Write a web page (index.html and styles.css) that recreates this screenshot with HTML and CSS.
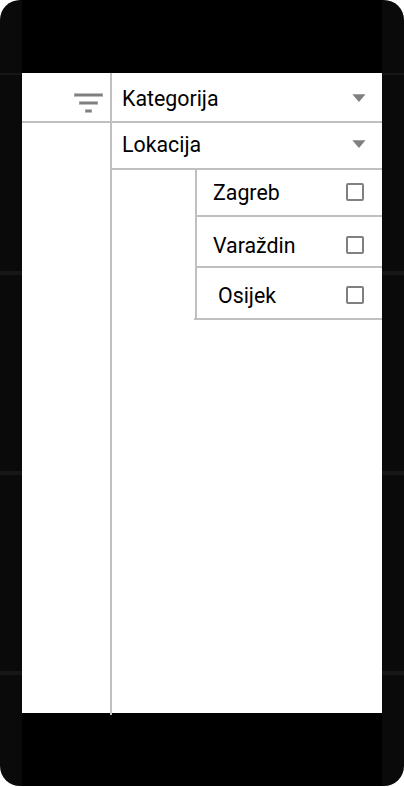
FILE: index.html
```
<!DOCTYPE html>
<html lang="hr">
<head>
<meta charset="utf-8">
<title>Filter</title>
<link rel="stylesheet" href="styles.css">
</head>
<body>
<div class="phone">
  <div class="bezel"></div>
  <div class="body">
    <div class="side"><i></i><i></i><i></i><i></i></div>
    <main class="screen">
      <div class="rail">
        <div class="toolbar">
          <svg class="filter" width="31" height="20" viewBox="0 0 31 20"><g fill="#808080"><path opacity=".5" d="M1 0h29v4H1zM6 8h19v4H6zM12 16h7v4h-7z"/><path d="M1.5 1h28v2h-28zM6.500 9h18v2h-18zM12.500 17h6v2h-6z"/></g></svg>
        </div>
      </div>
      <div class="panel">
        <div class="row category"><span>Kategorija</span><svg class="arrow" width="14" height="8" viewBox="0 0 14 8"><path d="M.3 .3h13.200L7 8z" fill="#808080"/></svg></div>
        <div class="row location"><span>Lokacija</span><svg class="arrow" width="14" height="8" viewBox="0 0 14 8"><path d="M.3 .3h13.200L7 8z" fill="#808080"/></svg></div>
        <div class="options">
          <label class="option zagreb"><span>Zagreb</span><b class="box"></b></label>
          <label class="option varazdin"><span>Varaždin</span><b class="box"></b></label>
          <label class="option osijek"><span>Osijek</span><b class="box"></b></label>
        </div>
      </div>
    </main>
    <div class="side"><i></i><i></i><i></i><i></i></div>
  </div>
  <div class="bezel"></div>
</div>
</body>
</html>
```
FILE: styles.css
```
* { box-sizing: border-box; }
body { margin: 0; background: #fff; font: 21.33px/24px Roboto, sans-serif; color: #000; }
.phone {
  width: 404px; height: 786px; border-radius: 20px; overflow: hidden;
  background: linear-gradient(90deg, #0a0a0a 22px, #000 22px, #000 382px, #0a0a0a 382px);
}
.bezel { height: 73px; }
.body { display: flex; height: 640px; }
.side { width: 22px; display: flex; flex-direction: column; gap: 196px; }
.side i { height: 4px; flex: none; background: #171717; }
.side i:first-child { height: 2px; }
.screen { width: 360px; display: flex; background: #fff; }
.rail { width: 90px; height: 642px; border-right: 2px solid #c0c0c0; }
.toolbar { height: 50px; padding: 20px 0 0 51px; border-bottom: 2px solid #c0c0c0; }
.filter { display: block; }
.panel { flex: 1; }
.row { display: flex; justify-content: space-between; padding: 0 16px 0 10px; border-bottom: 2px solid #c0c0c0; }
.category { height: 50px; padding-top: 14px; }
.location { height: 47px; padding-top: 10px; }
.arrow { margin-top: 7px; }
.options { margin-left: 83px; border-left: 2px solid #c0c0c0; }
.option { display: flex; justify-content: space-between; padding: 0 18px 0 16px; border-bottom: 2px solid #c0c0c0; }
.box { width: 18px; height: 18px; border: 2px solid #808080; border-radius: 2px; margin-top: 2px; }
.zagreb { height: 47px; padding-top: 11px; }
.varazdin { height: 51px; padding-top: 17px; }
.osijek { height: 52px; padding: 16px 18px 0 24px; margin-left: -3px; }
```
